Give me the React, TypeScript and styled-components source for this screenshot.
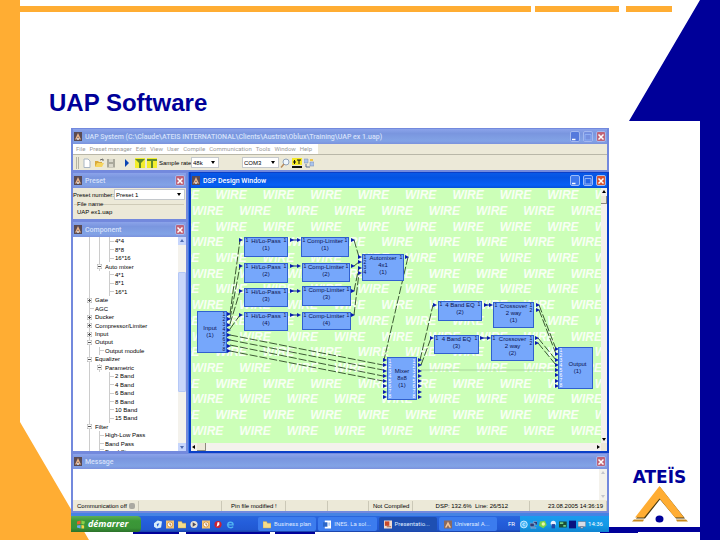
import React from "react";
import styled, { createGlobalStyle, css } from "styled-components";

const ui = '"Liberation Sans", Arial, sans-serif';
const caption = "Roboto, sans-serif";
const navy = "#000099";
const orange = "#ffad33";

const GlobalStyle = createGlobalStyle`
  * { box-sizing: border-box; }
  body { margin: 0; background: #fff; }
  button, select, textarea { font: inherit; margin: 0; padding: 0; border: 0; border-radius: 0; color: inherit; background: none; }
  ul, ol { margin: 0; padding: 0; list-style: none; }
`;

/* ---------- slide ---------- */

const Slide = styled.div`
  position: relative;
  min-height: 100vh;
  display: grid;
  grid-template-columns: 71px minmax(0, 1fr) 111px;
  grid-template-rows: auto 1fr;
  padding: 89px 0 8px;
  overflow: hidden;
`;

const Backdrop = styled.svg`
  position: absolute;
  inset: 0;
  width: 100%;
  height: 100%;
  z-index: -1;
`;

const Heading = styled.h1`
  grid-column: 1 / -1;
  margin: 0 0 11px 49px;
  font: bold 24px/28px ${ui};
  color: ${navy};
`;

const Desktop = styled.main`
  grid-column: 2;
  display: grid;
  grid-template-rows: auto minmax(0, 1fr) auto auto;
  font: 6px/8px ${ui};
  color: #000;
  background: #3f7be0;
`;

const Brand = styled.aside`
  align-self: end;
  display: flex;
  flex-direction: column;
  align-items: center;
  padding: 0 10px 9px 0;
  font: bold 17px/17px "DejaVu Sans", sans-serif;
  color: ${navy};
`;

/* ---------- windows ---------- */

const Win = styled.section<{ $active?: boolean }>`
  display: flex;
  flex-direction: column;
  min-width: 0;
  min-height: 0;
  border: solid ${(p) => (p.$active ? "#0a3fc8" : "#7389dd")};
  border-width: 1px 2px 2px;
  background: #ece9d8;
`;

const TitleBar = styled.header<{ $active?: boolean }>`
  display: flex;
  align-items: center;
  gap: 3px;
  height: 15px;
  flex: none;
  padding: 0 1px;
  color: ${(p) => (p.$active ? "#fff" : "#d5e0fa")};
  background: ${(p) =>
    p.$active
      ? "linear-gradient(#0a5ae8, #0453e2 30%, #0660f5 80%, #0450d8)"
      : "linear-gradient(#8ba3ea, #7a96df 30%, #82a3e6 80%, #7b92dd)"};
`;

const WinTitle = styled.h2`
  flex: 1;
  min-width: 0;
  margin: 0;
  font: 500 7px/12px ${caption};
  white-space: nowrap;
  overflow: hidden;
`;

const WinButton = styled.button<{ $kind: "min" | "max" | "close"; $active?: boolean }>`
  flex: none;
  width: 10px;
  height: 11px;
  display: grid;
  place-items: center;
  border: 1px solid ${(p) => (p.$active ? "#9cbcf8" : "#a3b8ef")};
  border-radius: 2px;
  color: ${(p) => (p.$kind === "max" ? "#8fb0f5" : "#fff")};
  background: ${(p) =>
    p.$kind === "close"
      ? p.$active
        ? "#d9542f"
        : "#bf6478"
      : p.$kind === "max"
        ? p.$active
          ? "#2766e6"
          : "#7590e0"
        : p.$active
          ? "#3d78ee"
          : "#5579dc"};
`;

const glyphs = {
  min: "M1 6.5H4.5",
  max: "M1 1.5H7V7H1Z",
  close: "M1.5 1.5L6.5 6.5M6.5 1.5L1.5 6.5",
};

function AppIcon() {
  return (
    <svg width="8" height="9" viewBox="0 0 8 9" aria-hidden="true">
      <path d="M0 0H8V9H0Z" fill="#5a4a52" />
      <path d="M1 7.5L4 1L7 7.5H5.500L4 4.500L2.500 7.500Z" fill="#e8b48a" />
      <circle cx="4" cy="7" r="0.900" fill="#fff" />
    </svg>
  );
}

type Kind = "min" | "max" | "close";

function Title({ text, active, buttons }: { text: string; active?: boolean; buttons: Kind[] }) {
  return (
    <TitleBar $active={active}>
      <AppIcon />
      <WinTitle>{text}</WinTitle>
      {buttons.map((kind) => (
        <WinButton key={kind} type="button" $kind={kind} $active={active} aria-label={kind}>
          <svg width="8" height="8" viewBox="0 0 8 8">
            <path d={glyphs[kind]} fill="none" stroke="currentColor" strokeWidth={kind === "max" ? 1 : 1.5} />
          </svg>
        </WinButton>
      ))}
    </TitleBar>
  );
}

/* ---------- menu and toolbar ---------- */

const MenuBar = styled.nav`
  display: flex;
  align-self: flex-start;
  gap: 4px;
  height: 10px;
  padding: 0 6px 0 3px;
  background: #fff;
  color: #9b9b98;
  font: 6px/9px ${caption};
`;

const ToolBar = styled.div`
  display: flex;
  align-items: center;
  height: 16px;
  padding-left: 3px;
  border-top: 1px solid #b9b7a8;
`;

const Grip = styled.span`
  width: 3px;
  height: 12px;
  margin-right: 2px;
  border: solid #b5b3a4;
  border-width: 0 1px;
`;

const ToolButton = styled.button<{ $wide?: boolean }>`
  width: ${(p) => (p.$wide ? "17px" : "12px")};
  height: 12px;
  display: grid;
  place-items: center;
`;

const Field = styled.label`
  display: flex;
  align-items: center;
  white-space: nowrap;
`;

const RateText = styled.span`
  width: 33px;
  padding-left: 1px;
`;

const SelectBox = styled.span<{ $width: string }>`
  position: relative;
  width: ${(p) => p.$width};
  height: 11px;
  display: flex;
  border: 1px solid #c4c8cc;
  background: #fff;

  &::after {
    content: "";
    position: absolute;
    right: 3px;
    top: 3px;
    border: solid transparent;
    border-width: 3px 2px 0;
    border-top-color: #000;
    pointer-events: none;
  }
`;

const Select = styled.select`
  appearance: none;
  width: 100%;
  padding-left: 1px;
  font: 6px/8px ${ui};
`;

const PushRight = styled.span`
  width: 23px;
`;

function ToolGlyph({ name }: { name: string }) {
  return (
    <svg width="10" height="10" viewBox="0 0 10 10" aria-hidden="true">
      {name === "new" && <path d="M2 1H6L8 3V9.500H2Z" fill="#fff" stroke="#a9b6c4" />}
      {name === "open" && (
        <>
          <path d="M1 8.500V3H4L5 4H8V8.500Z" fill="#d9a93a" />
          <path d="M1 9L3 5H10L8 9Z" fill="#f6d560" />
          <path d="M6 2L9 1V3" fill="none" stroke="#666" />
        </>
      )}
      {name === "save" && (
        <>
          <path d="M1 1H9V9.500H1Z" fill="#aaa99c" />
          <path d="M3 1H7V4H3ZM3 6H7V9H3Z" fill="#dad8cb" />
        </>
      )}
      {name === "play" && <path d="M4 1V9L8 5Z" fill="#0b44b4" />}
      {(name === "up" || name === "down") && (
        <>
          <path d="M0 0H10V10H0Z" fill="#f3ee2d" />
          <path d={name === "up" ? "M0 1H10L6 5V10H4V5Z" : "M0 1H10V3H6V10H4V3H0Z"} fill="#5f8a2c" />
        </>
      )}
      {name === "zoom" && (
        <>
          <circle cx="6" cy="4" r="3" fill="#eef6ff" stroke="#8fa2bb" />
          <path d="M4 6L1 9.500" stroke="#b98b5c" strokeWidth="1.500" />
        </>
      )}
      {name === "text" && (
        <>
          <path d="M0 0H10V7H0Z" fill="#f6ea27" />
          <path d="M0 8H10V10H0Z" fill="#111" />
          <path d="M1 4H4M2.500 2V6M5 2H9M7 2V6" stroke="#111" />
        </>
      )}
      {name === "net" && (
        <>
          <path d="M0 1H4V5H0ZM6 4H10V8H6Z" fill="#a9c4ee" stroke="#7d8ba5" strokeWidth="0.500" />
          <path d="M6 1H9V3H6Z" fill="#f0c646" />
          <path d="M2 6V9H6" fill="none" stroke="#5c6f94" />
        </>
      )}
    </svg>
  );
}

/* ---------- middle area ---------- */

const Workspace = styled.div`
  display: grid;
  grid-template-columns: 117px minmax(0, 1fr);
  gap: 1px;
  min-height: 0;
`;

const SideColumn = styled.div`
  display: grid;
  grid-template-rows: auto minmax(0, 1fr);
  min-height: 0;
`;

const PresetBody = styled.div`
  padding: 1px 1px 2px 0;
`;

const FileGroup = styled.fieldset`
  margin: 0 1px;
  padding: 0 0 1px 3px;
  border: solid #cfcbb8;
  border-width: 1px 0 0;

  legend {
    padding: 0;
    line-height: 8px;
  }
`;

const FieldName = styled.span`
  flex: 1;
`;

const TreePane = styled.div`
  flex: 1;
  display: flex;
  min-height: 0;
  background: #fff;
`;

const Tree = styled.ul`
  flex: 1;
  display: flex;
  flex-direction: column;
  padding-left: 11px;
  overflow: hidden;
`;

const TreeRow = styled.li<{ $cut?: boolean }>`
  display: flex;
  align-items: center;
  white-space: nowrap;
  ${(p) =>
    p.$cut
      ? css`flex: none; height: 3px; align-items: flex-start; overflow: hidden;`
      : css`flex: 1 1 0; min-height: 0;`}
`;

const Guide = styled.span<{ $kind: string }>`
  align-self: stretch;
  width: 10px;
  display: grid;
  place-items: center;
  ${(p) =>
    p.$kind !== "none" &&
    css`background: linear-gradient(#ccc, #ccc) 5px 0 / 1px 100% no-repeat;`}
  ${(p) =>
    p.$kind === "tee" &&
    css`background: linear-gradient(#ccc, #ccc) 5px 0 / 1px 100% no-repeat,
      linear-gradient(#ccc, #ccc) 5px 50% / 5px 1px no-repeat;`}
`;

const TreeLabel = styled.span`
  padding-left: 1px;
`;

const rows: [string, string][] = [
  ["bar bar tee", "4*4"],
  ["bar bar tee", "8*8"],
  ["bar bar tee", "16*16"],
  ["bar minus", "Auto mixer"],
  ["bar none tee", "4*1"],
  ["bar none tee", "8*1"],
  ["bar none tee", "16*1"],
  ["plus", "Gate"],
  ["tee", "AGC"],
  ["plus", "Ducker"],
  ["plus", "Compressor/Limiter"],
  ["plus", "Input"],
  ["minus", "Output"],
  ["bar tee", "Output module"],
  ["minus", "Equalizer"],
  ["bar minus", "Parametric"],
  ["bar none tee", "2 Band"],
  ["bar none tee", "4 Band"],
  ["bar none tee", "6 Band"],
  ["bar none tee", "8 Band"],
  ["bar none tee", "10 Band"],
  ["bar none tee", "15 Band"],
  ["minus", "Filter"],
  ["bar tee", "High-Low Pass"],
  ["bar tee", "Band Pass"],
  ["bar tee", "Band Stop"],
];

/* ---------- scroll bars ---------- */

const Scroll = styled.div<{ $dir: "v" | "h"; $size: string; $tone: "blue" | "plain" }>`
  display: flex;
  flex: none;
  justify-content: space-between;
  align-items: center;
  flex-direction: ${(p) => (p.$dir === "v" ? "column" : "row")};
  ${(p) => (p.$dir === "v" ? "width" : "height")}: ${(p) => p.$size};
  color: ${(p) => (p.$tone === "blue" ? "#4d6bb0" : "#000")};
  background: #f4f2ec;
`;

const ScrollButton = styled.button<{ $tone: "blue" | "plain" | "pale" }>`
  flex: none;
  width: ${(p) => (p.$tone === "plain" ? "6px" : "8px")};
  height: 8px;
  display: grid;
  place-items: center;
  color: ${(p) => (p.$tone === "pale" ? "#c4c6cc" : "inherit")};
  background: ${(p) => (p.$tone === "blue" ? "#c6d5fc" : "#f4f2ec")};
`;

const Thumb = styled.span`
  width: 8px;
  flex: 0 1 120px;
  margin: 27px 0 auto;
  border-radius: 1px;
  border: 1px solid #b5c8f6;
  background: #c8d6fb;
`;

const PlainThumb = styled.span<{ $dir: "v" | "h" }>`
  width: ${(p) => (p.$dir === "v" ? "6px" : "9px")};
  height: 8px;
  ${(p) => (p.$dir === "v" ? "margin-bottom: auto;" : "margin-right: auto;")}
  border: solid #8d8a7c;
  border-width: 0 1px 1px 0;
  background: #ece9d8;
`;

const arrowPaths: Record<string, string> = {
  up: "M1 4L3 1L5 4Z",
  down: "M1 2L3 5L5 2Z",
  left: "M4 1L1 3L4 5Z",
  right: "M2 1L5 3L2 5Z",
};

function Arrow({ dir, tone = "plain" }: { dir: string; tone?: "blue" | "plain" | "pale" }) {
  return (
    <ScrollButton type="button" $tone={tone} aria-label={`Scroll ${dir}`}>
      <svg width="6" height="6" viewBox="0 0 6 6">
        <path d={arrowPaths[dir]} fill="currentColor" />
      </svg>
    </ScrollButton>
  );
}

/* ---------- design canvas ---------- */

const DesignGrid = styled.div`
  flex: 1;
  display: grid;
  grid-template-columns: minmax(0, 1fr) 6px;
  grid-template-rows: minmax(0, 1fr) 8px;
  min-height: 0;
`;

const Canvas = styled.div`
  position: relative;
  overflow: hidden;
  background: #ccffb8;
`;

const Watermark = styled.div`
  position: absolute;
  inset: 0;
  display: flex;
  flex-direction: column;
  padding-bottom: 4px;
  font: italic bold 12px/15px ${ui};
  color: #f8fff4;
`;

const WatermarkRow = styled.div<{ $shifted: boolean }>`
  flex: 1;
  display: flex;
  align-items: center;
  justify-content: space-between;
  margin: ${(p) => (p.$shifted ? "0 -1px 0 1px" : "0 -25px 0 -23px")};
`;

const Wires = styled.svg`
  position: absolute;
  left: 0;
  top: 0;
`;

const Block = styled.div<{ $x: number; $y: number; $w: number; $h: number; $center?: boolean }>`
  position: absolute;
  left: ${(p) => p.$x - 191}px;
  top: ${(p) => p.$y - 188}px;
  width: ${(p) => p.$w}px;
  height: ${(p) => p.$h}px;
  display: flex;
  justify-content: space-between;
  align-items: ${(p) => (p.$center ? "center" : "flex-start")};
  border: 1px solid #3060cf;
  background: #76a7fb;
  color: #0b1250;
  font: 6px/7px ${ui};
`;

const BlockLabel = styled.span`
  flex: 1;
  text-align: center;
  white-space: pre;
`;

const Ports = styled.ol<{ $light?: boolean }>`
  width: 4px;
  font-size: 5px;
  line-height: 5px;
  text-align: center;
  color: ${(p) => (p.$light ? "#fff" : "#0b1250")};
`;

type Node = { x: number; y: number; w: number; h: number; label: string; ins: number; outs: number; center?: boolean };

const nodes: Node[] = [
  { x: 244, y: 237, w: 44, h: 20, label: "Hi/Lo-Pass\n(1)", ins: 1, outs: 1 },
  { x: 244, y: 263, w: 44, h: 20, label: "Hi/Lo-Pass\n(2)", ins: 1, outs: 1 },
  { x: 244, y: 288, w: 44, h: 19, label: "Hi/Lo-Pass\n(3)", ins: 1, outs: 1 },
  { x: 244, y: 312, w: 44, h: 19, label: "Hi/Lo-Pass\n(4)", ins: 1, outs: 1 },
  { x: 301, y: 237, w: 48, h: 20, label: "Comp-Limiter\n(1)", ins: 1, outs: 1 },
  { x: 302, y: 263, w: 48, h: 19, label: "Comp-Limiter\n(2)", ins: 1, outs: 1 },
  { x: 302, y: 286, w: 49, h: 20, label: "Comp-Limiter\n(3)", ins: 1, outs: 1 },
  { x: 302, y: 312, w: 49, h: 18, label: "Comp-Limiter\n(4)", ins: 1, outs: 1 },
  { x: 362, y: 254, w: 42, h: 27, label: "Automixer\n4x1\n(1)", ins: 4, outs: 1 },
  { x: 197, y: 311, w: 30, h: 42, label: "Input\n(1)", ins: 0, outs: 8, center: true },
  { x: 387, y: 357, w: 30, h: 43, label: "Mixer\n8x8\n(1)", ins: 8, outs: 8, center: true },
  { x: 438, y: 301, w: 44, h: 20, label: "4 Band EQ\n(2)", ins: 1, outs: 1 },
  { x: 434, y: 335, w: 45, h: 19, label: "4 Band EQ\n(3)", ins: 1, outs: 1 },
  { x: 493, y: 302, w: 41, h: 26, label: "Crossover\n2 way\n(1)", ins: 1, outs: 2 },
  { x: 491, y: 335, w: 43, h: 26, label: "Crossover\n2 way\n(2)", ins: 1, outs: 2 },
  { x: 558, y: 347, w: 35, h: 42, label: "Output\n(1)", ins: 8, outs: 0, center: true },
];

const portRun = (x: number, first: number, count: number) =>
  Array.from({ length: count }, (_, i) => [x, first + Math.round((i * 37) / 7)]);

const ports = [
  ...portRun(227, 314, 8),
  ...portRun(383, 360, 8),
  ...portRun(418, 360, 8),
  ...portRun(555, 349, 8),
  ...portRun(358, 257, 4),
  ...[240, 266, 291, 315].flatMap((y) => [[239, y], [290, y], [297, y], [351, y]]),
  [405, 257], [433, 305], [484, 305], [489, 305], [536, 305], [536, 310],
  [430, 338], [480, 338], [487, 338], [535, 338], [535, 343],
];

const wires = [
  [230, 314, 240, 240], [230, 319, 240, 266], [230, 324, 240, 291], [230, 329, 240, 315],
  [230, 335, 383, 365], [230, 340, 383, 370], [230, 345, 383, 376], [230, 351, 383, 381],
  [354, 240, 359, 257], [354, 266, 359, 262], [354, 291, 359, 267], [354, 315, 359, 273],
  [408, 257, 384, 360], [420, 360, 433, 305], [421, 365, 431, 338],
  [539, 305, 556, 349], [539, 310, 556, 354], [538, 338, 556, 360], [538, 343, 556, 365],
];

const links = [
  [292, 240, 297, 240], [292, 266, 297, 266], [292, 291, 297, 291], [292, 315, 297, 315],
  [486, 305, 490, 305], [482, 338, 488, 338],
];

const line = ([a, b, c, d]: number[]) => `M${a} ${b}L${c} ${d}`;

const digits = (n: number) => Array.from({ length: n }, (_, i) => <li key={i}>{i + 1}</li>);

function Design() {
  return (
    <Canvas>
      <Watermark aria-hidden="true">
        {Array.from({ length: 16 }, (_, r) => (
          <WatermarkRow key={r} $shifted={r % 2 === 1}>
            {Array.from({ length: r % 2 ? 9 : 10 }, (_, c) => (
              <span key={c}>WIRE</span>
            ))}
          </WatermarkRow>
        ))}
      </Watermark>
      <Wires width="410" height="255" viewBox="191 188 410 255">
        <path d="M421 370H555" stroke="#a9d69b" />
        <path d={wires.map(line).join("")} fill="none" stroke="#3c5a34" strokeDasharray="8 2" />
        <path d={links.map(line).join("")} stroke="#10239c" />
        <path d={ports.map(([x, y]) => `M${x} ${y - 2}V${y + 2}L${x + 4} ${y}Z`).join("")} fill="#0a1cae" />
      </Wires>
      {nodes.map((n, i) => (
        <Block key={i} $x={n.x} $y={n.y} $w={n.w} $h={n.h} $center={n.center}>
          {n.ins > 0 && <Ports $light={n.ins > 4}>{digits(n.ins)}</Ports>}
          <BlockLabel>{n.label}</BlockLabel>
          {n.outs > 0 && <Ports $light={n.ins > 4}>{digits(n.outs)}</Ports>}
        </Block>
      ))}
    </Canvas>
  );
}

/* ---------- message and status ---------- */

const MessageRow = styled.div`
  display: flex;
  height: 31px;
  background: #fff;
`;

const MessageText = styled.textarea`
  flex: 1;
  resize: none;
  outline: 0;
`;

const StatusBar = styled.footer`
  display: grid;
  grid-template-columns: 62fr 84fr 66fr 42fr 42fr 41fr 119fr 78fr;
  height: 11px;
  padding-top: 1px;
  line-height: 9px;
  white-space: nowrap;
`;

const StatusCell = styled.span<{ $align?: string }>`
  display: flex;
  align-items: center;
  justify-content: ${(p) => p.$align ?? "center"};
  gap: 2px;
  padding: 0 3px 0 4px;
  border-right: 1px solid #cbc8b7;
`;

const Led = styled.i`
  width: 6px;
  height: 6px;
  border-radius: 2px;
  background: #aaa9a2;
`;

/* ---------- taskbar ---------- */

const TaskBar = styled.nav`
  display: flex;
  align-items: stretch;
  height: 19px;
  border-top: 3px solid #4583e4;
  background: linear-gradient(#2a66dd, #245edb 40%, #2158d2 85%, #1941a5);
  color: #dfe9ff;
  font: 6px/8px ${caption};
`;

const StartButton = styled.button`
  display: flex;
  align-items: center;
  gap: 3px;
  width: 70px;
  padding-left: 6px;
  border-radius: 0 4px 4px 0;
  background: linear-gradient(#5cae57, #3b9838 30%, #3a9437 75%, #2b7229);
  color: #fff;
  font: italic bold 9px/12px "Open Sans", sans-serif;
`;

const QuickLaunch = styled.div`
  display: flex;
  align-items: center;
  gap: 4px;
  width: 117px;
  padding-left: 13px;
`;

const IconButton = styled.button`
  display: grid;
  place-items: center;
  width: 8px;
  height: 9px;
`;

const TaskList = styled.div`
  flex: 1;
  min-width: 0;
  display: grid;
  grid-template-columns: repeat(4, minmax(0, 1fr));
  gap: 2px;
  padding: 1px 11px 1px 0;
`;

const Task = styled.button<{ $active?: boolean }>`
  display: flex;
  align-items: center;
  gap: 3px;
  padding-left: 5px;
  border-radius: 2px;
  white-space: nowrap;
  background: ${(p) => (p.$active ? "#1e4fb2" : "#3c7cee")};
`;

const Language = styled.span`
  align-self: center;
  width: 12px;
  color: #fff;
`;

const Tray = styled.div`
  display: flex;
  align-items: center;
  gap: 2px;
  width: 89px;
  padding-right: 6px;
  background: linear-gradient(#1a9bee, #129ae6 60%, #0f83d0);
  color: #fff;

  time { margin-left: auto; }
`;

const icons: Record<string, React.ReactNode> = {
  windows: (
    <>
      <path d="M0 1L4 0V4L0 4.500Z" fill="#e8632c" />
      <path d="M5 0L9 1L8 4.500L5 4Z" fill="#8cd04a" />
      <path d="M0 5.500L4 5V9L0 8Z" fill="#6aa8f5" />
      <path d="M5 5L8 5.500V9L5 9Z" fill="#f8d64c" />
    </>
  ),
  bird: <path d="M0 3L4 0L9 1L8 8L3 9L0 7Z M3 4L6 3L4 7Z" fill="#d6ecfa" fillRule="evenodd" />,
  clock: (
    <>
      <path d="M0 0H9V9H0Z" fill="#f3c474" />
      <circle cx="4.500" cy="4.500" r="3" fill="#fff" stroke="#cf8d35" />
      <path d="M4.500 3V5H6" fill="none" stroke="#a05d1c" />
    </>
  ),
  folder: <path d="M0 1H4L5 3H9V8.500H0Z" fill="#f6dc8a" stroke="#c9a03f" strokeWidth="0.500" />,
  media: (
    <>
      <circle cx="4.500" cy="4.500" r="4" fill="#e7e2d4" />
      <path d="M3 2L7 4.500L3 7Z" fill="#4c4a5c" />
    </>
  ),
  red: (
    <>
      <circle cx="4.500" cy="4.500" r="4" fill="#cc2233" />
      <path d="M4 2H6V5L3 7Z" fill="#fff" />
    </>
  ),
  globe: <path d="M1 5H8C8 1 2 1 2 5S7 8.500 8 7" fill="none" stroke="#4fb4f2" strokeWidth="1.500" />,
  word: (
    <>
      <path d="M2 0H9V9H2Z" fill="#fff" />
      <path d="M0 2H5V7H0Z" fill="#2c66c8" />
      <path d="M6 3H8M6 5H8" stroke="#7ba2e0" />
    </>
  ),
  slides: (
    <>
      <path d="M0 0H9V9H0Z" fill="#f2ddd0" />
      <path d="M1 1H6V6H1Z" fill="#c8492a" />
      <path d="M3 7H8" stroke="#9b5a44" />
    </>
  ),
  ateis: (
    <>
      <path d="M0 0H9V9H0Z" fill="#8a6a60" />
      <path d="M1 8L4.500 1L8 8H6L4.500 5L3 8Z" fill="#f3c69b" />
    </>
  ),
  back: (
    <>
      <circle cx="4.500" cy="4.500" r="4" fill="#4fb9f7" stroke="#d9f0ff" />
      <path d="M5.500 2.500L3.500 4.500L5.500 6.500" fill="none" stroke="#fff" />
    </>
  ),
  net: <path d="M0 3H5V7H0ZM4 1H9V5H6V3H4ZM1 8H7V9H1Z" fill="#2c3b78" stroke="#b9d5ee" strokeWidth="0.500" />,
  green: (
    <>
      <path d="M1 1L7 0L9 5L5 9L0 6Z" fill="#7bd44a" />
      <circle cx="5" cy="4" r="2" fill="#e9f7a8" />
    </>
  ),
  mic: (
    <>
      <circle cx="5" cy="3" r="3" fill="#e8eefc" />
      <path d="M3 4H7V9H3Z" fill="#2346a5" />
    </>
  ),
  card: (
    <>
      <path d="M0 1H9V8H0Z" fill="#1d4e33" />
      <path d="M1 2H5V4H1ZM5 5H8V7H5Z" fill="#6ed08a" />
    </>
  ),
  screen: <path d="M0 0H9V9H0Z" fill="#0a1280" />,
  display: <path d="M0 1H9V7H0ZM3 7H6V9H3Z" fill="#d8dde6" stroke="#4a5570" strokeWidth="0.500" />,
};

function Glyph({ name }: { name: string }) {
  return (
    <svg width="8" height="9" viewBox="0 0 9 9" aria-hidden="true">
      {icons[name]}
    </svg>
  );
}

const menu = ["File", "Preset manager", "Edit", "View", "User", "Compile", "Communication", "Tools", "Window", "Help"];

export default function App() {
  return (
    <Slide>
      <GlobalStyle />
      <Backdrop viewBox="0 0 720 540" preserveAspectRatio="none" aria-hidden="true">
        <path d="M0 0H20V422L89 540H0Z" fill={orange} />
        <path d="M20 6H531V12H20ZM535 6H619V12H535ZM626 6H672V12H626Z" fill={orange} />
        <path d="M700 0H720V540H700V121H629Z" fill={navy} />
        <path d="M133 528H179V534H133ZM186 528H270V534H186ZM275 528H315V534H275ZM600 527H700V532H638V533H600Z" fill={navy} />
      </Backdrop>

      <Heading>UAP Software</Heading>

      <Desktop>
        <Win>
          <Title
            text="UAP System (C:\Claude\ATEIS INTERNATIONAL\Clients\Austria\Oblux\Training\UAP ex 1.uap)"
            buttons={["min", "max", "close"]}
          />
          <MenuBar>
            {menu.map((m) => (
              <span key={m}>{m}</span>
            ))}
          </MenuBar>
          <ToolBar>
            <Grip />
            {["new", "open", "save"].map((n) => (
              <ToolButton key={n} type="button" aria-label={n}>
                <ToolGlyph name={n} />
              </ToolButton>
            ))}
            {["play", "up", "down"].map((n) => (
              <ToolButton key={n} type="button" $wide={n === "play"} aria-label={n}>
                <ToolGlyph name={n} />
              </ToolButton>
            ))}
            <Field>
              <RateText>Sample rate</RateText>
              <SelectBox $width="28px">
                <Select defaultValue="48k">
                  <option>48k</option>
                </Select>
              </SelectBox>
            </Field>
            <PushRight />
            <SelectBox $width="37px">
              <Select aria-label="Port" defaultValue="COM3">
                <option>COM3</option>
              </Select>
            </SelectBox>
            {["zoom", "text", "net"].map((n) => (
              <ToolButton key={n} type="button" aria-label={n}>
                <ToolGlyph name={n} />
              </ToolButton>
            ))}
          </ToolBar>
        </Win>

        <Workspace>
          <SideColumn>
            <Win>
              <Title text="Preset" buttons={["close"]} />
              <PresetBody>
                <Field>
                  <FieldName>Preset number:</FieldName>
                  <SelectBox $width="71px">
                    <Select defaultValue="Preset 1">
                      <option>Preset 1</option>
                    </Select>
                  </SelectBox>
                </Field>
                <FileGroup>
                  <legend>File name</legend>
                  UAP ex1.uap
                </FileGroup>
              </PresetBody>
            </Win>
            <Win>
              <Title text="Component" buttons={["close"]} />
              <TreePane>
                <Tree>
                  {rows.map(([guides, label], i) => (
                    <TreeRow key={i} $cut={i === rows.length - 1}>
                      {guides.split(" ").map((kind, k) => (
                        <Guide key={k} $kind={kind}>
                          {(kind === "plus" || kind === "minus") && (
                            <svg width="5" height="5" viewBox="0 0 5 5">
                              <path d="M0 0H5V5H0Z" fill="#fff" stroke="#aaa" />
                              <path d={kind === "plus" ? "M1 2.500H4M2.500 1V4" : "M1 2.500H4"} stroke="#555" />
                            </svg>
                          )}
                        </Guide>
                      ))}
                      <TreeLabel>{label}</TreeLabel>
                    </TreeRow>
                  ))}
                </Tree>
                <Scroll $dir="v" $size="8px" $tone="blue">
                  <Arrow dir="up" tone="blue" />
                  <Thumb />
                  <Arrow dir="down" tone="blue" />
                </Scroll>
              </TreePane>
            </Win>
          </SideColumn>

          <Win $active>
            <Title text="DSP Design Window" active buttons={["min", "max", "close"]} />
            <DesignGrid>
              <Design />
              <Scroll $dir="v" $size="6px" $tone="plain">
                <Arrow dir="up" />
                <PlainThumb $dir="v" />
                <Arrow dir="down" />
              </Scroll>
              <Scroll $dir="h" $size="8px" $tone="plain">
                <Arrow dir="left" />
                <PlainThumb $dir="h" />
                <Arrow dir="right" />
              </Scroll>
            </DesignGrid>
          </Win>
        </Workspace>

        <Win>
          <Title text="Message" buttons={["close"]} />
          <MessageRow>
            <MessageText readOnly aria-label="Message" />
            <Scroll $dir="v" $size="8px" $tone="blue">
              <Arrow dir="up" tone="pale" />
              <Arrow dir="down" tone="pale" />
            </Scroll>
          </MessageRow>
          <StatusBar>
            <StatusCell $align="flex-start">
              Communication off <Led />
            </StatusCell>
            <StatusCell />
            <StatusCell>Pin file modified !</StatusCell>
            <StatusCell />
            <StatusCell />
            <StatusCell>Not Compiled</StatusCell>
            <StatusCell>DSP: 132.6% &nbsp;Line: 26/512</StatusCell>
            <StatusCell $align="flex-end">23.08.2005 14:36:19</StatusCell>
          </StatusBar>
        </Win>

        <TaskBar>
          <StartButton type="button">
            <Glyph name="windows" />
            démarrer
          </StartButton>
          <QuickLaunch>
            {["bird", "clock", "folder", "media", "clock", "red", "globe"].map((n, i) => (
              <IconButton key={i} type="button" aria-label={n}>
                <Glyph name={n} />
              </IconButton>
            ))}
          </QuickLaunch>
          <TaskList>
            <Task type="button"><Glyph name="folder" />Business plan</Task>
            <Task type="button"><Glyph name="word" />INES. La sol...</Task>
            <Task type="button" $active><Glyph name="slides" />Presentatio...</Task>
            <Task type="button"><Glyph name="ateis" />Universal A...</Task>
          </TaskList>
          <Language>FR</Language>
          <Tray>
            {["back", "net", "green", "mic", "card", "screen", "display"].map((n) => (
              <Glyph key={n} name={n} />
            ))}
            <time>14:36</time>
          </Tray>
        </TaskBar>
      </Desktop>

      <Brand>
        ATEÏS
        <svg width="56" height="37" viewBox="632 487 56 37" aria-hidden="true">
          <path d="M660 488L685 519.500H676L660 500.500L645 519.500H636Z" fill="#4a3a10" />
          <path d="M659.500 487L684 518.500H675L659.500 499.500L644 518.500H635Z" fill={orange} />
          <path d="M634 520.500H644L643 522.500H632ZM676 520.500H686L688 522.500H677Z" fill="#c98a1c" />
          <ellipse cx="659.500" cy="520" rx="4" ry="3.500" fill={navy} />
        </svg>
      </Brand>
    </Slide>
  );
}
